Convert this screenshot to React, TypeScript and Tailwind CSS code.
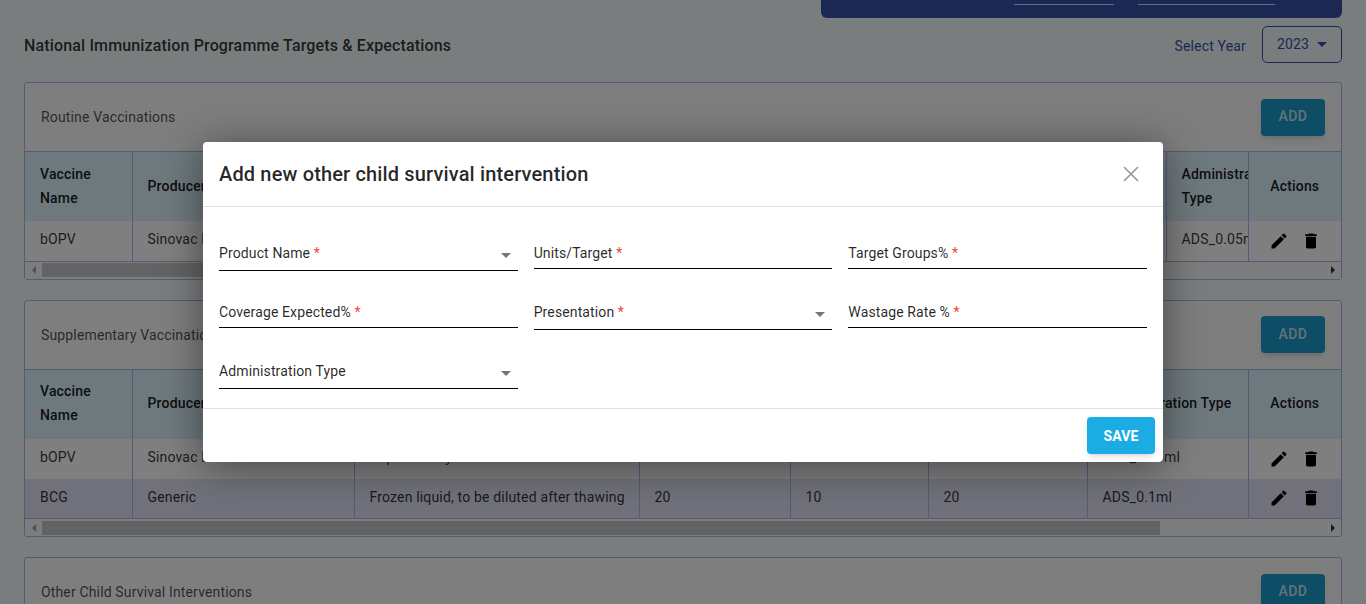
import { MdEdit, MdDelete } from "react-icons/md";

interface Row {
    name: string;
    producer: string;
    presentation: string;
    a: string;
    b: string;
    c: string;
    admin: string;
}

const supplementaryRows: Row[] = [
    { name: "bOPV", producer: "Sinovac Life Sciences", presentation: "Capsule - dry", a: "20", b: "10", c: "20", admin: "ADS_0.05ml" },
    { name: "BCG", producer: "Generic", presentation: "Frozen liquid, to be diluted after thawing", a: "20", b: "10", c: "20", admin: "ADS_0.1ml" },
];

const routineRows: Row[] = [
    { name: "bOPV", producer: "Sinovac Life Sciences", presentation: "Capsule - dry", a: "20", b: "10", c: "20", admin: "ADS_0.05ml" },
];

const Caret = ({ className }: { className: string }) => (
    <svg viewBox="0 0 10 5" className={className}>
        <polygon points="0,0 10,0 5,5" fill="currentColor" />
    </svg>
);

const Scrollbar = () => (
    <div className="flex h-[17px] items-center bg-[#fbfbfb]">
        <div className="flex w-[17px] justify-center">
            <svg viewBox="0 0 4 8" className="h-2 w-1 text-[#a0a0a0]">
                <polygon points="4,0 4,8 0,4" fill="currentColor" />
            </svg>
        </div>
        <div className="h-[14px] w-[1118px] bg-[#c6c6c6]" />
        <div className="flex-1" />
        <div className="flex w-[17px] justify-center">
            <svg viewBox="0 0 4 8" className="h-2 w-1 text-[#333]">
                <polygon points="0,0 0,8 4,4" fill="currentColor" />
            </svg>
        </div>
    </div>
);

const VaccineTable = ({ rows, widths }: { rows: Row[]; widths: number[] }) => (
    <div className="overflow-hidden">
        <table className="w-[1316px] table-fixed border-collapse text-sm tracking-[0.17px]">
            <colgroup>
                {widths.map((w, i) => (
                    <col key={i} style={{ width: w }} />
                ))}
            </colgroup>
            <thead>
                <tr className="h-[69px] bg-[#ddf3fb] text-black/90">
                    <th className="border-r border-[#a9b5ee] px-[15px] pb-[2px] text-left font-medium leading-6">
                        Vaccine Name
                    </th>
                    <th className="border-r border-[#a9b5ee] px-[15px] pb-[2px] text-left font-medium">Producer</th>
                    <th className="border-r border-[#a9b5ee] px-[15px] pb-[2px] text-left font-medium">Presentation</th>
                    <th className="border-r border-[#a9b5ee] px-[15px] pb-[2px] text-left font-medium">Units/Target</th>
                    <th className="border-r border-[#a9b5ee] px-[15px] pb-[2px] text-left font-medium">Target Groups%</th>
                    <th className="border-r border-[#a9b5ee] px-[15px] pb-[2px] text-left font-medium">Coverage</th>
                    <th className="overflow-hidden border-r border-[#a9b5ee] px-[15px] pb-[2px] text-left font-medium leading-6">
                        Administration Type
                    </th>
                    <th className="pb-[2px] text-center font-medium">Actions</th>
                </tr>
            </thead>
            <tbody>
                {rows.map((r, i) => (
                    <tr
                        key={r.name}
                        className={`h-10 text-black/80 last:border-b last:border-[#a9b5ee] ${i % 2 === 1 ? "bg-[#e2e2f6]" : "bg-white"}`}
                    >
                        <td className="border-r border-[#a9b5ee] px-[15px] pb-[3px]">{r.name}</td>
                        <td className="overflow-hidden border-r border-[#a9b5ee] px-[15px] pb-[3px] whitespace-nowrap">{r.producer}</td>
                        <td className="overflow-hidden border-r border-[#a9b5ee] px-[15px] pb-[3px] whitespace-nowrap">{r.presentation}</td>
                        <td className="border-r border-[#a9b5ee] px-[15px] pb-[3px]">{r.a}</td>
                        <td className="border-r border-[#a9b5ee] px-[15px] pb-[3px]">{r.b}</td>
                        <td className="border-r border-[#a9b5ee] px-[15px] pb-[3px]">{r.c}</td>
                        <td className="overflow-hidden border-r border-[#a9b5ee] px-[15px] pb-[3px] whitespace-nowrap">{r.admin}</td>
                        <td>
                            <div className="flex items-center justify-center gap-3 text-black">
                                <MdEdit size={20} />
                                <MdDelete size={20} />
                            </div>
                        </td>
                    </tr>
                ))}
            </tbody>
        </table>
    </div>
);

const Card = ({ title, children }: { title: string; children?: React.ReactNode }) => (
    <div className="rounded-[3px] border border-[#a9b5ee] bg-[#fcfcfc]">
        <div className="flex h-[69px] items-center justify-between border-b border-[#a9b5ee] pl-4 pr-4">
            <span className="text-sm tracking-[0.15px] text-black/70">{title}</span>
            <button className="h-[37px] w-16 rounded bg-[#1a9ccc] pb-[2px] text-sm font-medium tracking-[0.4px] text-white/75 shadow-md">
                ADD
            </button>
        </div>
        {children}
    </div>
);

const Field = ({ label, required, select }: { label: string; required?: boolean; select?: boolean }) => (
    <div className={`flex items-start justify-between border-b border-black ${select ? "h-[28px]" : "h-[26px]"}`}>
        <span className="text-sm leading-5 tracking-[0.12px] text-black/85">
            {label}
            {required && <span className="text-[#f44336]"> *</span>}
        </span>
        {select && <Caret className="mr-[7px] mt-[10px] h-[5px] w-[10px] text-[#757575]" />}
    </div>
);

export default function App() {
    return (
        <div className="relative h-screen overflow-hidden bg-[#f5fbfd] font-['Roboto',sans-serif]">
            <div className="flex justify-end pr-6">
                <div className="flex h-[18px] w-[521px] items-start rounded-b-md bg-[#3850a8] pl-[193px] pt-[4px]">
                    <div className="h-px w-[100px] bg-white/80" />
                    <div className="ml-6 h-px w-[137px] bg-white/80" />
                </div>
            </div>
            <div className="flex h-[64px] items-center justify-between pb-[19px] pl-6 pr-6 pt-2">
                <h1 className="mt-[2px] text-base font-medium tracking-[0.15px] text-black/80">
                    National Immunization Programme Targets &amp; Expectations
                </h1>
                <div className="flex items-center gap-4">
                    <span className="mt-[2px] text-sm tracking-[0.17px] text-[#3850a8]">Select Year</span>
                    <div className="flex h-[37px] w-20 items-center justify-center gap-2 rounded-[5px] border border-[#3850a8] pb-[1px] text-sm tracking-[0.17px] text-[#3850a8]">
                        2023
                        <Caret className="mt-[1px] h-[5px] w-[10px]" />
                    </div>
                </div>
            </div>
            <div className="flex flex-col gap-5 px-6">
                <Card title="Routine Vaccinations">
                    <VaccineTable rows={routineRows} widths={[107, 222, 285, 150, 139, 238, 82, 93]} />
                    <Scrollbar />
                </Card>
                <Card title="Supplementary Vaccinations">
                    <VaccineTable rows={supplementaryRows} widths={[107, 222, 285, 151, 138, 159, 161, 93]} />
                    <Scrollbar />
                </Card>
                <Card title="Other Child Survival Interventions" />
            </div>

            <div className="absolute inset-0 bg-black/50">
                <div className="ml-[203px] mt-[142px] w-[960px] rounded bg-white shadow-[0_5px_40px_rgba(0,0,0,0.45)]">
                    <div className="flex h-[65px] items-center justify-between border-b border-[#e2e2e2] pl-4 pr-6">
                        <h2 className="text-xl font-medium tracking-[0.15px] text-black/85">Add new other child survival intervention</h2>
                        <svg viewBox="0 0 16 16" className="h-4 w-4 text-[#9a9a9a]">
                            <path d="M1 1 15 15M15 1 1 15" stroke="currentColor" strokeWidth="1.7" fill="none" />
                        </svg>
                    </div>
                    <div className="grid h-[202px] grid-cols-3 content-start items-start gap-x-4 border-b border-[#e2e2e2] px-4 pt-[36px]">
                        <div className="h-[59px]"><Field label="Product Name" required select /></div>
                        <div className="h-[59px]"><Field label="Units/Target" required /></div>
                        <div className="h-[59px]"><Field label="Target Groups%" required /></div>
                        <div className="h-[59px]"><Field label="Coverage Expected%" required /></div>
                        <div className="h-[59px]"><Field label="Presentation" required select /></div>
                        <div className="h-[59px]"><Field label="Wastage Rate %" required /></div>
                        <div><Field label="Administration Type" select /></div>
                    </div>
                    <div className="flex h-[53px] items-start justify-end pr-2 pt-2">
                        <button className="h-[37px] w-[68px] rounded bg-[#1cace4] text-sm font-bold tracking-[0.17px] text-white shadow-md">
                            SAVE
                        </button>
                    </div>
                </div>
            </div>
        </div>
    );
}
